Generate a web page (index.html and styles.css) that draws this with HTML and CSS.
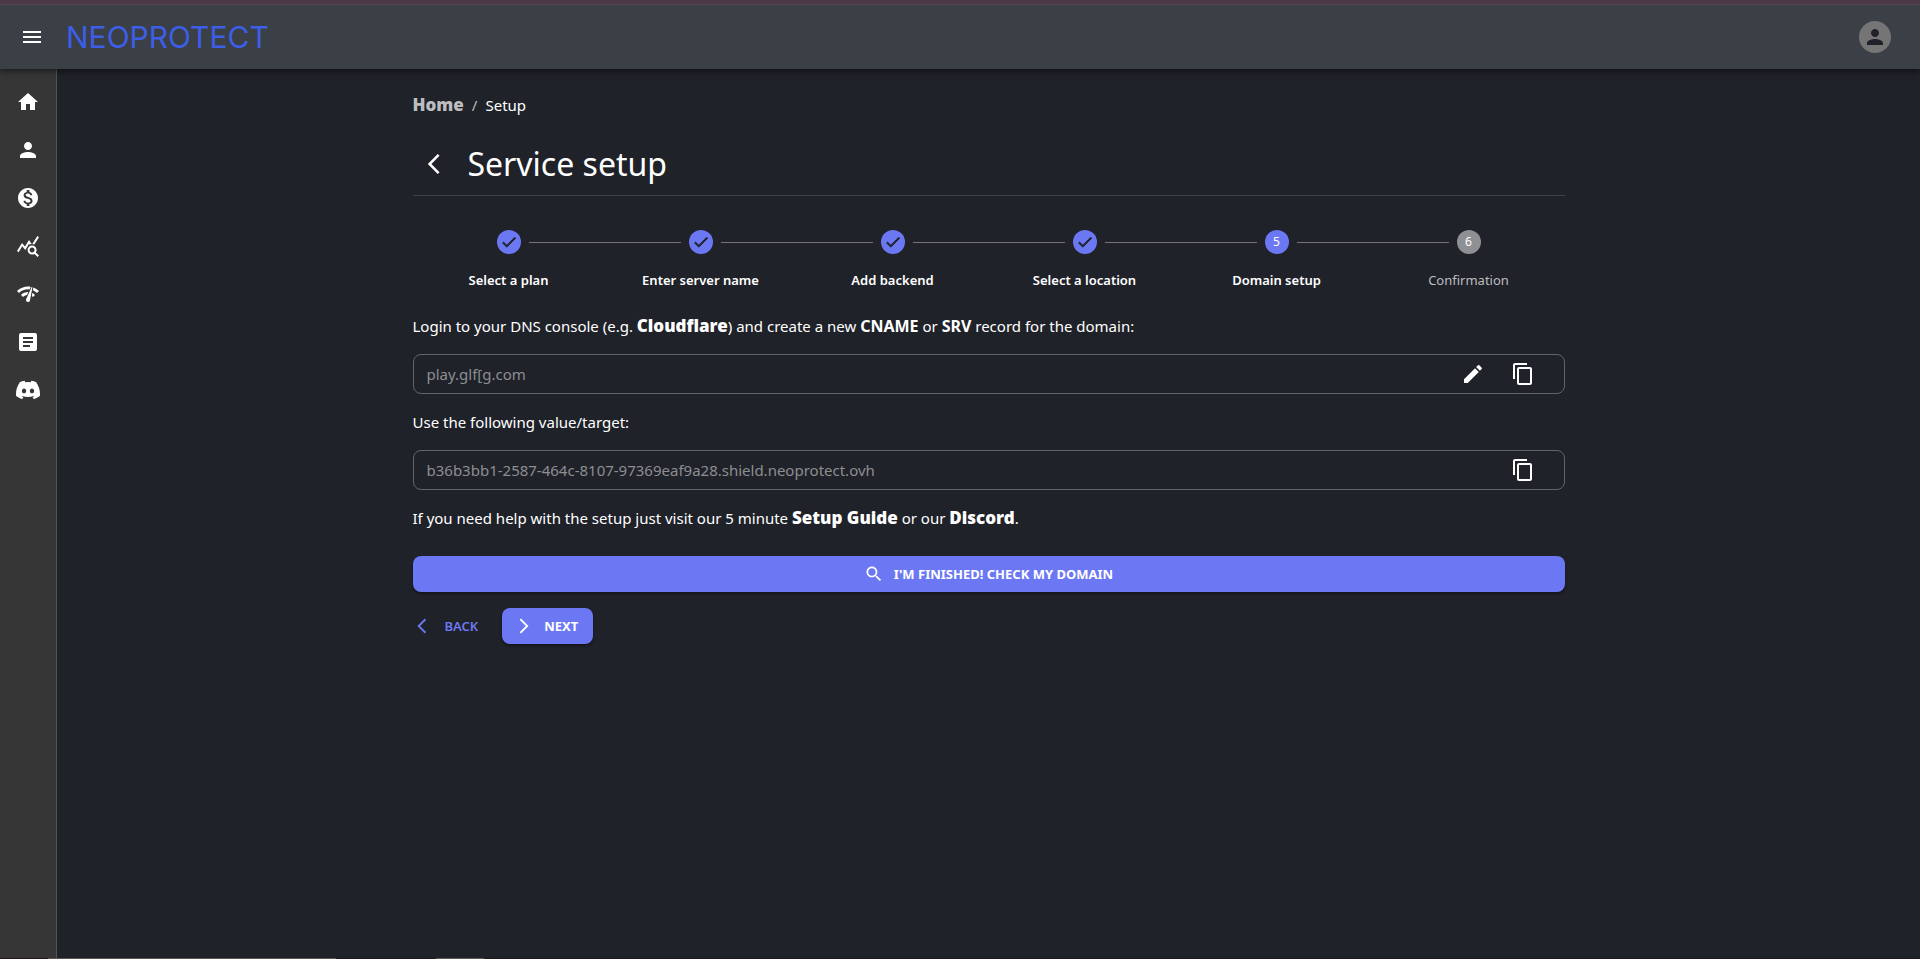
FILE: index.html
```html
<!DOCTYPE html>
<html lang="en">
<head>
<meta charset="utf-8">
<title>NeoProtect - Service setup</title>
<link rel="stylesheet" href="styles.css">
</head>
<body>
<header class="topbar">
  <button class="icon-btn" aria-label="Open menu"><svg viewBox="0 0 24 24"><path d="M3 18h18v-2H3v2zm0-5h18v-2H3v2zm0-7v2h18V6H3z"/></svg></button>
  <a class="logo" href="#">NEOPROTECT</a>
  <button class="avatar" aria-label="Account"><svg viewBox="0 0 24 24"><path d="M12 12c2.21 0 4-1.79 4-4s-1.79-4-4-4-4 1.790-4 4 1.790 4 4 4zm0 2c-2.670 0-8 1.340-8 4v2h16v-2c0-2.660-5.330-4-8-4z"/></svg></button>
</header>
<div class="shell">
  <nav class="sidebar" aria-label="Main">
    <a href="#" aria-label="Home"><svg viewBox="0 0 24 24"><path d="M10 20v-6h4v6h5v-8h3L12 3 2 12h3v8z"/></svg></a>
    <a href="#" aria-label="Profile"><svg viewBox="0 0 24 24"><path d="M12 12c2.210 0 4-1.790 4-4s-1.790-4-4-4-4 1.790-4 4 1.790 4 4 4zm0 2c-2.670 0-8 1.340-8 4v2h16v-2c0-2.660-5.330-4-8-4z"/></svg></a>
    <a href="#" aria-label="Billing"><svg viewBox="0 0 24 24"><path d="M12 2C6.480 2 2 6.480 2 12s4.480 10 10 10 10-4.480 10-10S17.520 2 12 2zm1.410 16.090V20h-2.670v-1.930c-1.710-.36-3.160-1.460-3.270-3.400h1.960c.1 1.050.82 1.870 2.650 1.870 1.960 0 2.400-.98 2.400-1.590 0-.83-.44-1.610-2.670-2.140-2.480-.6-4.180-1.620-4.180-3.670 0-1.720 1.390-2.840 3.110-3.210V4h2.670v1.950c1.860.45 2.790 1.860 2.850 3.390H14.300c-.05-1.110-.64-1.870-2.220-1.870-1.500 0-2.400.68-2.400 1.640 0 .84.65 1.390 2.670 1.910s4.180 1.390 4.180 3.910c-.01 1.830-1.380 2.830-3.120 3.160z"/></svg></a>
    <a href="#" aria-label="Analytics"><svg viewBox="0 0 24 24"><path d="M19.880 18.470c.44-.7.7-1.510.7-2.390 0-2.490-2.010-4.500-4.500-4.500s-4.500 2.010-4.500 4.500 2.010 4.500 4.490 4.500c.88 0 1.700-.26 2.390-.7L21.580 23 23 21.580l-3.120-3.110zm-3.800.11c-1.380 0-2.500-1.120-2.500-2.500s1.120-2.500 2.500-2.500 2.500 1.120 2.500 2.500-1.120 2.500-2.500 2.500zm-.36-8.500c-.74.02-1.450.18-2.100.45l-.55-.83-3.800 6.180-3.010-3.520-3.630 5.810L1 17l5-8 3 3.500L13 6l2.720 4.080zm2.590.5c-.64-.28-1.330-.45-2.050-.49L21.380 2 23 3.180l-4.690 7.400z"/></svg></a>
    <a href="#" aria-label="Network check"><svg viewBox="0 0 24 24"><path d="M15.900 5c-.17 0-.32.09-.41.23l-.07.15-5.180 11.650c-.16.29-.26.61-.26.96 0 1.110.9 2.010 2.010 2.010.96 0 1.770-.68 1.960-1.590l.01-.03L16.400 5.500c0-.28-.22-.5-.5-.5zM1 9l2 2c2.880-2.880 6.790-4.080 10.530-3.620l1.190-2.680C9.890 3.840 4.740 5.270 1 9zm20 2 2-2c-1.640-1.640-3.550-2.820-5.590-3.570l-.53 2.820c1.500.62 2.900 1.530 4.120 2.750zm-4 4 2-2c-.8-.8-1.700-1.420-2.660-1.890l-.55 2.920c.42.27.83.59 1.210.97zM5 13l2 2c1.130-1.130 2.560-1.790 4.030-2l1.280-2.880c-2.630-.08-5.300.87-7.310 2.880z"/></svg></a>
    <a href="#" aria-label="Documentation"><svg viewBox="0 0 24 24"><path d="M19 3H5c-1.100 0-2 .9-2 2v14c0 1.100.9 2 2 2h14c1.100 0 2-.9 2-2V5c0-1.100-.9-2-2-2zm-5 14H7v-2h7v2zm3-4H7v-2h10v2zm0-4H7V7h10v2z"/></svg></a>
    <a href="#" aria-label="Discord"><svg viewBox="0 0 24 24"><path d="M20.317 4.370a19.790 19.790 0 0 0-4.885-1.515.074.074 0 0 0-.079.037c-.21.375-.444.864-.608 1.250a18.270 18.270 0 0 0-5.487 0 12.640 12.640 0 0 0-.617-1.250.077.077 0 0 0-.079-.037A19.736 19.736 0 0 0 3.677 4.370a.07.07 0 0 0-.032.027C.533 9.046-.32 13.580.099 18.057a.082.082 0 0 0 .031.057 19.900 19.900 0 0 0 5.993 3.030.078.078 0 0 0 .084-.028 14.090 14.090 0 0 0 1.226-1.994.076.076 0 0 0-.041-.106 13.107 13.107 0 0 1-1.872-.892.077.077 0 0 1-.008-.128c.126-.094.252-.192.372-.291a.074.074 0 0 1 .077-.01c3.928 1.793 8.180 1.793 12.062 0a.074.074 0 0 1 .078.009c.12.099.246.198.373.292a.077.077 0 0 1-.006.127 12.299 12.299 0 0 1-1.873.892.077.077 0 0 0-.041.107c.36.698.772 1.362 1.225 1.993a.076.076 0 0 0 .084.028 19.839 19.839 0 0 0 6.002-3.030.077.077 0 0 0 .032-.054c.5-5.177-.838-9.674-3.549-13.660a.061.061 0 0 0-.031-.03zM8.020 15.330c-1.183 0-2.157-1.085-2.157-2.419 0-1.333.956-2.419 2.157-2.419 1.210 0 2.176 1.096 2.157 2.420 0 1.333-.956 2.418-2.157 2.418zm7.975 0c-1.183 0-2.157-1.085-2.157-2.419 0-1.333.955-2.419 2.157-2.419 1.210 0 2.176 1.096 2.157 2.420 0 1.333-.946 2.418-2.157 2.418z"/></svg></a>
  </nav>
  <main class="main">
    <div class="container">
      <nav class="crumbs" aria-label="Breadcrumb"><a class="strong-link" href="#">Home</a><span class="slash">/</span><span>Setup</span></nav>
      <div class="title-row">
        <button class="icon-btn" aria-label="Go back"><svg viewBox="0 0 24 24"><path d="M17.510 3.870 15.730 2.100 5.840 12l9.900 9.900 1.770-1.770L9.380 12z"/></svg></button>
        <h1>Service setup</h1>
      </div>
      <ol class="stepper">
        <li class="done"><span class="dot"><svg viewBox="0 0 24 24"><path d="M9 16.170 4.830 12l-1.420 1.410L9 19 21 7l-1.410-1.410z"/></svg></span><span class="label">Select a plan</span></li>
        <li class="done"><span class="dot"><svg viewBox="0 0 24 24"><path d="M9 16.170 4.830 12l-1.420 1.410L9 19 21 7l-1.410-1.410z"/></svg></span><span class="label">Enter server name</span></li>
        <li class="done"><span class="dot"><svg viewBox="0 0 24 24"><path d="M9 16.170 4.830 12l-1.420 1.410L9 19 21 7l-1.410-1.410z"/></svg></span><span class="label">Add backend</span></li>
        <li class="done"><span class="dot"><svg viewBox="0 0 24 24"><path d="M9 16.170 4.830 12l-1.420 1.410L9 19 21 7l-1.410-1.410z"/></svg></span><span class="label">Select a location</span></li>
        <li class="active"><span class="dot">5</span><span class="label">Domain setup</span></li>
        <li class="todo"><span class="dot">6</span><span class="label">Confirmation</span></li>
      </ol>
      <label class="text" for="domain">Login to your DNS console (e.g. <a class="strong-link" href="#">Cloudflare</a>) and create a new <b>CNAME</b> or <b>SRV</b> record for the domain:</label>
      <div class="field">
        <input id="domain" type="text" value="play.glf[g.com" readonly>
        <button class="icon-btn" aria-label="Edit domain"><svg viewBox="0 0 24 24"><path d="M3 17.250V21h3.750L17.810 9.940l-3.750-3.750L3 17.250zM20.710 7.040c.39-.39.39-1.020 0-1.410l-2.340-2.340a.9959.9959 0 0 0-1.410 0l-1.830 1.830 3.750 3.750 1.830-1.830z"/></svg></button>
        <button class="icon-btn" aria-label="Copy domain"><svg viewBox="0 0 24 24"><path d="M16 1H4c-1.100 0-2 .9-2 2v14h2V3h12V1zm3 4H8c-1.100 0-2 .9-2 2v14c0 1.100.9 2 2 2h11c1.100 0 2-.9 2-2V7c0-1.100-.9-2-2-2zm0 16H8V7h11v14z"/></svg></button>
      </div>
      <label class="text" for="target">Use the following value/target:</label>
      <div class="field">
        <input id="target" type="text" value="b36b3bb1-2587-464c-8107-97369eaf9a28.shield.neoprotect.ovh" readonly>
        <button class="icon-btn" aria-label="Copy target"><svg viewBox="0 0 24 24"><path d="M16 1H4c-1.100 0-2 .9-2 2v14h2V3h12V1zm3 4H8c-1.100 0-2 .9-2 2v14c0 1.100.9 2 2 2h11c1.100 0 2-.9 2-2V7c0-1.100-.9-2-2-2zm0 16H8V7h11v14z"/></svg></button>
      </div>
      <p class="text">If you need help with the setup just visit our 5 minute <a class="strong-link" href="#">Setup Guide</a> or our <a class="strong-link" href="#">Discord</a>.</p>
      <button class="btn primary wide"><svg viewBox="0 0 24 24"><path d="M15.500 14h-.79l-.28-.27C15.410 12.590 16 11.110 16 9.500 16 5.910 13.090 3 9.500 3S3 5.910 3 9.500 5.910 16 9.500 16c1.610 0 3.090-.59 4.230-1.570l.27.28v.79l5 4.990L20.490 19l-4.990-5zm-6 0C7.010 14 5 11.990 5 9.500S7.010 5 9.500 5 14 7.010 14 9.500 11.990 14 9.500 14z"/></svg>I'M FINISHED! CHECK MY DOMAIN</button>
      <div class="actions">
        <button class="btn plain"><svg viewBox="0 0 24 24"><path d="M17.510 3.870 15.730 2.100 5.840 12l9.900 9.900 1.770-1.770L9.380 12z"/></svg>BACK</button>
        <button class="btn primary"><svg viewBox="0 0 24 24"><path d="M6.230 20.230 8 22l10-10L8 2 6.230 3.770 14.460 12z"/></svg>NEXT</button>
      </div>
    </div>
  </main>
</div>
<div class="bottom-strip"></div>
</body>
</html>
```
FILE: styles.css
```css
* { box-sizing: border-box; }
body {
  margin: 0;
  min-height: 100vh;
  display: flex;
  flex-direction: column;
  background: #1f2229;
  color: #fff;
  font: 15px/24px "Noto Sans", "Open Sans", sans-serif;
}
a { color: inherit; text-decoration: none; }
button { font: inherit; color: inherit; border: 0; padding: 0; background: none; cursor: pointer; }
svg { display: block; width: 24px; height: 24px; fill: currentColor; flex: none; }

.topbar {
  position: relative;
  display: flex;
  align-items: center;
  height: 69px;
  padding: 0 29px 0 20px;
  border-top: 4px solid #4c3845;
  background: #3b3f46;
  box-shadow: inset 0 1px #50484c, 0 2px 4px rgba(0,0,0,.3), 0 4px 8px rgba(0,0,0,.2);
}
.logo {
  margin-left: 22px;
  font: 30px/40px Inter, sans-serif;
  color: #3d5ee6;
}
.icon-btn { display: flex; }
.avatar {
  display: grid;
  place-items: center;
  width: 32px;
  height: 32px;
  margin-left: auto;
  border-radius: 50%;
  background: #757575;
  color: #1f2229;
}

.shell { flex: 1; display: flex; }
.sidebar {
  display: flex;
  flex-direction: column;
  align-items: center;
  gap: 24px;
  width: 57px;
  padding-top: 21px;
  background: #363636;
  border-right: 1px solid #535353;
}
.main { flex: 1; }
.container { max-width: 1200px; margin: 0 auto; padding: 24px; }

.crumbs { display: flex; gap: 8px; }
.strong-link { font-size: 17px; font-weight: 900; }
.crumbs .strong-link, .slash { color: #bcbdbf; }
.title-row {
  display: flex;
  align-items: center;
  gap: 22px;
  margin-top: 18px;
  padding: 7px 9px 9px;
  border-bottom: 1px solid #3f4145;
}
h1 { margin: 0; font-size: 32px; line-height: 44px; font-weight: 400; }

.stepper {
  display: grid;
  grid-template-columns: repeat(6, 1fr);
  margin: 34px 0 6px;
  padding: 0;
  list-style: none;
  font-size: 13px;
}
.stepper li {
  position: relative;
  display: flex;
  flex-direction: column;
  align-items: center;
  gap: 14px;
}
.dot {
  display: grid;
  place-items: center;
  width: 24px;
  height: 24px;
  border-radius: 50%;
  background: #6c78f3;
  font-size: 12px;
}
.dot svg { width: 18px; height: 18px; fill: #1f2229; stroke: #1f2229; }
.stepper li:not(:last-child)::after {
  content: "";
  position: absolute;
  left: calc(50% + 20px);
  right: calc(-50% + 20px);
  top: 12px;
  height: 1px;
  background: #757575;
}
.label { font-weight: 600; }
.todo .label { font-weight: 400; color: #bcbdbf; }
.todo .dot { background: #8f9094; }

.text { display: block; margin: 0; padding: 16px 0; }
.text b { font-size: 16px; }
.field {
  display: flex;
  align-items: center;
  gap: 26px;
  height: 40px;
  padding: 0 29px 0 13px;
  border: 1px solid #626467;
  border-radius: 8px;
}
.field input {
  flex: 1;
  min-width: 0;
  padding: 0;
  border: 0;
  outline: 0;
  background: none;
  color: #8d8e91;
  font: inherit;
}

.btn {
  display: flex;
  align-items: center;
  justify-content: center;
  gap: 14px;
  height: 36px;
  border-radius: 8px;
  font-size: 13px;
  font-weight: 700;
}
.btn svg { width: 18px; height: 18px; }
.primary { background: #6c78f3; box-shadow: 0 2px 3px rgba(0,0,0,.4); }
.wide { width: 100%; margin-top: 10px; gap: 10px; }
.wide svg { width: 20px; height: 20px; }
.actions { display: flex; gap: 24px; margin-top: 16px; }
.actions .primary { padding: 0 15px 0 13px; gap: 11px; }
.plain { color: #6c78f3; font-weight: 600; }

.bottom-strip {
  height: 1px;
  background: linear-gradient(to right, #24151d 48px, #5c5555 48px 336px, #24151d 336px 436px, #5c5c5c 436px 484px, #24151d 484px);
}
```
